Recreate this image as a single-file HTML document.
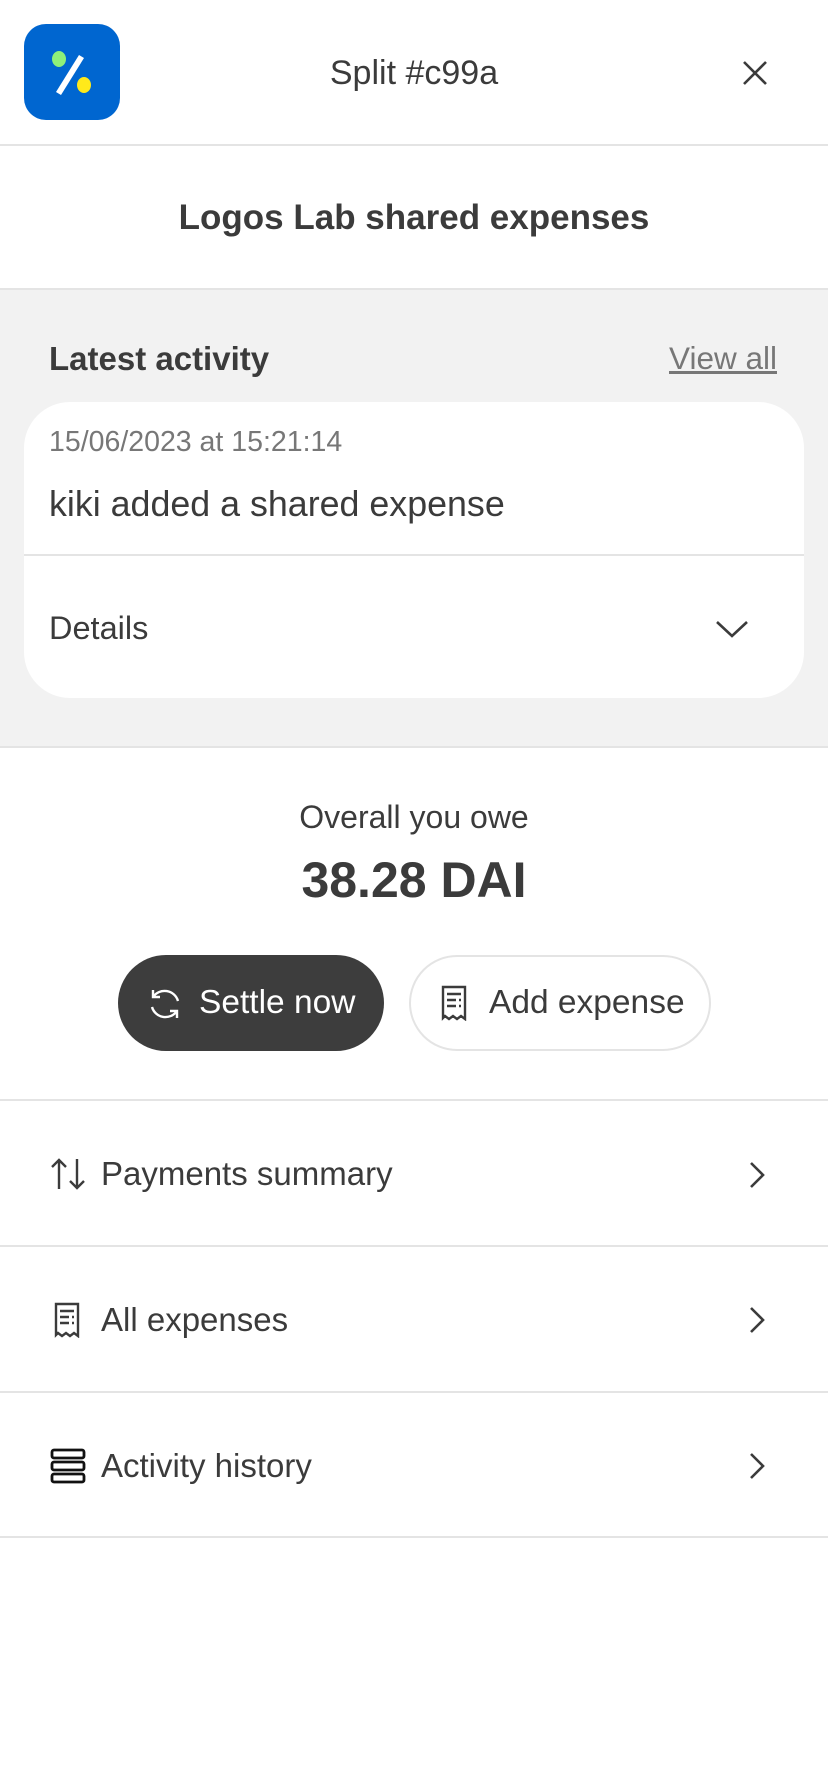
<!DOCTYPE html>
<html><head><meta charset="utf-8"><style>
*{margin:0;padding:0;box-sizing:border-box}
body{width:828px;height:1792px;background:#fff;font-family:"Liberation Sans",sans-serif;color:#3b3b3b;position:relative;overflow:hidden}
.a{position:absolute}
.line{position:absolute;left:0;width:828px;height:2px;background:#e4e4e4}
.t{position:absolute;white-space:nowrap;line-height:1}
</style></head><body>
<div class="a" style="left:24px;top:24px;width:96px;height:96px;border-radius:22px;background:#0066d0"></div>
<svg class="a" style="left:24px;top:24px" width="96" height="96" viewBox="0 0 96 96">
<ellipse cx="35" cy="35" rx="7" ry="8" fill="#8ef07a"/>
<ellipse cx="60" cy="61" rx="7" ry="8" fill="#ffe91a"/>
<path d="M55 31 L60 34 L37 71 L32 68 Z" fill="#fff"/>
</svg>
<div class="t" style="left:0;width:828px;text-align:center;top:56px;font-size:34px">Split #c99a</div>
<svg class="a" style="left:741px;top:59px" width="28" height="28" viewBox="0 0 28 28"><path d="M3 3L25 25M25 3L3 25" stroke="#3b3b3b" stroke-width="2.6"/></svg>
<div class="line" style="top:144px"></div>
<div class="t" style="left:0;width:828px;text-align:center;top:200px;font-size:35px;font-weight:bold">Logos Lab shared expenses</div>
<div class="line" style="top:288px"></div>
<div class="a" style="left:0;top:290px;width:828px;height:456px;background:#f2f2f2"></div>
<div class="t" style="left:49px;top:342px;font-size:33px;font-weight:bold">Latest activity</div>
<div class="t" style="right:51px;top:343px;font-size:31.5px;color:#777;text-decoration:underline">View all</div>
<div class="a" style="left:24px;top:402px;width:780px;height:296px;background:#fff;border-radius:46px"></div>
<div class="t" style="left:49px;top:428px;font-size:28.5px;color:#777">15/06/2023 at 15:21:14</div>
<div class="t" style="left:49px;top:487px;font-size:35.8px">kiki added a shared expense</div>
<div class="a" style="left:24px;top:554px;width:780px;height:2px;background:#e4e4e4"></div>
<div class="t" style="left:49px;top:612px;font-size:32.5px">Details</div>
<svg class="a" style="left:715px;top:619px" width="34" height="20" viewBox="0 0 34 20"><path d="M2 3L17 17L32 3" fill="none" stroke="#3b3b3b" stroke-width="2.6"/></svg>
<div class="line" style="top:746px"></div>
<div class="t" style="left:0;width:828px;text-align:center;top:801px;font-size:32px">Overall you owe</div>
<div class="t" style="left:0;width:828px;text-align:center;top:855px;font-size:50px;font-weight:bold">38.28 DAI</div>
<div class="a" style="left:118px;top:955px;width:266px;height:96px;border-radius:48px;background:#3d3d3d"></div>
<svg class="a" style="left:148px;top:987px" width="34" height="34" viewBox="0 0 34 34"><path d="M5 10A14 14 0 0 1 30 14M29 24A14 14 0 0 1 4 20M5 3V10H12M29 31V24H22" fill="none" stroke="#fff" stroke-width="2.4"/></svg>
<div class="t" style="left:199px;top:986px;font-size:33.5px;color:#fff">Settle now</div>
<div class="a" style="left:409px;top:955px;width:302px;height:96px;border-radius:48px;border:2px solid #e4e4e4"></div>
<svg class="a" style="left:441px;top:985px" width="26" height="36" viewBox="0 0 26 36"><path d="M2 2H24V34L20 31L16 34L12 31L8 34L4 31L2 33Z" fill="none" stroke="#3b3b3b" stroke-width="2.4"/><path d="M6 9H20M6 15H15M18 15H20M6 21H15M18 21H20" stroke="#3b3b3b" stroke-width="2.4"/></svg>
<div class="t" style="left:489px;top:986px;font-size:33.5px">Add expense</div>
<div class="line" style="top:1099px"></div>
<svg class="a" style="left:50px;top:1157px" width="36" height="34" viewBox="0 0 36 34"><path d="M9 32V3M2 10L9 3L16 10M27 2V31M20 24L27 31L34 24" fill="none" stroke="#3b3b3b" stroke-width="2.4"/></svg>
<div class="t" style="left:101px;top:1157px;font-size:33px">Payments summary</div>
<svg class="a" style="left:748px;top:1161px" width="18" height="28" viewBox="0 0 18 28"><path d="M3 2L15 14L3 26" fill="none" stroke="#3b3b3b" stroke-width="2.6"/></svg>
<div class="line" style="top:1245px"></div>
<svg class="a" style="left:54px;top:1302px" width="26" height="36" viewBox="0 0 26 36"><path d="M2 2H24V34L20 31L16 34L12 31L8 34L4 31L2 33Z" fill="none" stroke="#3b3b3b" stroke-width="2.4"/><path d="M6 9H20M6 15H15M18 15H20M6 21H15M18 21H20" stroke="#3b3b3b" stroke-width="2.4"/></svg>
<div class="t" style="left:101px;top:1303px;font-size:33px">All expenses</div>
<svg class="a" style="left:748px;top:1306px" width="18" height="28" viewBox="0 0 18 28"><path d="M3 2L15 14L3 26" fill="none" stroke="#3b3b3b" stroke-width="2.6"/></svg>
<div class="line" style="top:1391px"></div>
<svg class="a" style="left:50px;top:1448px" width="36" height="36" viewBox="0 0 36 36"><rect x="2" y="2" width="32" height="8" rx="2" fill="none" stroke="#111" stroke-width="2.8"/><rect x="2" y="14" width="32" height="8" rx="2" fill="none" stroke="#111" stroke-width="2.8"/><rect x="2" y="26" width="32" height="8" rx="2" fill="none" stroke="#111" stroke-width="2.8"/></svg>
<div class="t" style="left:101px;top:1449px;font-size:33px">Activity history</div>
<svg class="a" style="left:748px;top:1452px" width="18" height="28" viewBox="0 0 18 28"><path d="M3 2L15 14L3 26" fill="none" stroke="#3b3b3b" stroke-width="2.6"/></svg>
<div class="line" style="top:1536px"></div>
</body></html>
